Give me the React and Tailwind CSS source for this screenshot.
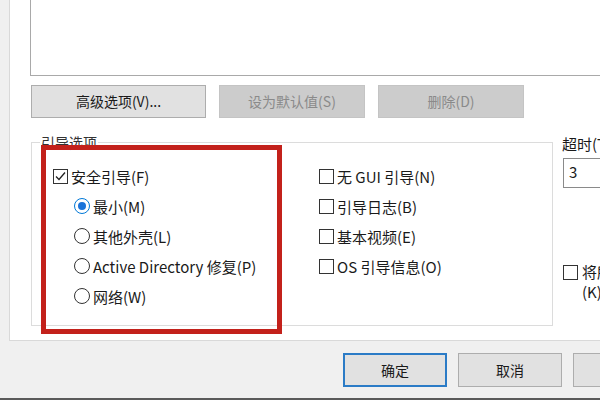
import React from "react";

const font = { fontFamily: '"Noto Sans CJK SC", "Noto Sans", sans-serif' };

const CheckBox = ({ checked = false }) => (
    <span className="w-[15px] h-[15px] border border-[#333333] bg-white flex items-center justify-center shrink-0">
        {checked && (
            <svg width="13" height="13" viewBox="0 0 13 13">
                <path d="M2 6.5 L5 9.5 L11 2.5" fill="none" stroke="#222" strokeWidth="1.3" />
            </svg>
        )}
    </span>
);

const Radio = ({ checked = false }) => (
    <span
        className={`w-[16px] h-[16px] rounded-full border bg-white flex items-center justify-center shrink-0 ${
            checked ? "border-[#0078d7]" : "border-[#333333]"
        }`}
    >
        {checked && <span className="w-[8px] h-[8px] rounded-full bg-[#1a73d9]" />}
    </span>
);

const Option = ({ control, label, indent = false }) => (
    <div className={`h-[30px] flex items-center gap-[3px] ${indent ? "pl-[21px]" : ""}`}>
        {control}
        <span className="text-[15px] text-[#1a1a1a] leading-none whitespace-nowrap">{label}</span>
    </div>
);

const Button = ({ children, w, disabled = false, primary = false }) => (
    <div
        className={`h-[33px] flex items-center justify-center text-[14px] shrink-0 ${
            disabled
                ? "bg-[#cccccc] border border-[#c4c4c4] text-[#8a8a8a]"
                : primary
                ? "bg-[#e1e1e1] border-2 border-[#2b7bc6] text-[#1a1a1a]"
                : "bg-[#e1e1e1] border border-[#adadad] text-[#1a1a1a]"
        } ${w}`}
    >
        {children}
    </div>
);

export default function App() {
    return (
        <div className="w-[600px] h-[400px] bg-[#f0f0f0] overflow-hidden flex flex-col" style={font}>
            {/* tab page */}
            <div className="h-[341px] ml-[9px] w-[720px] bg-white border-l border-b border-[#d9d9d9] pl-[20px] shrink-0">
                {/* list box, top cut off */}
                <div className="h-[76px] w-[700px] border-x border-b border-[#a9a9a9] bg-white" />

                {/* action buttons */}
                <div className="flex gap-[13px] mt-[9px] pl-[1px]">
                    <Button w="w-[175px]">高级选项(V)...</Button>
                    <Button w="w-[146px]" disabled>设为默认值(S)</Button>
                    <Button w="w-[146px]" disabled>删除(D)</Button>
                </div>

                <div className="flex mt-[24px]">
                    {/* boot options group */}
                    <div className="relative w-[522px] h-[184px] border border-[#dcdcdc] ml-[1px] shrink-0">
                        <span className="absolute -top-[11px] left-[8px] bg-white px-[1px] text-[14px] text-[#333333] leading-[20px]">
                            引导选项
                        </span>
                        <div className="flex pt-[18px] pl-[21px]">
                            <div className="w-[266px]">
                                <Option control={<CheckBox checked />} label="安全引导(F)" />
                                <Option indent control={<Radio checked />} label="最小(M)" />
                                <Option indent control={<Radio />} label="其他外壳(L)" />
                                <Option indent control={<Radio />} label="Active Directory 修复(P)" />
                                <Option indent control={<Radio />} label="网络(W)" />
                            </div>
                            <div>
                                <Option control={<CheckBox />} label="无 GUI 引导(N)" />
                                <Option control={<CheckBox />} label="引导日志(B)" />
                                <Option control={<CheckBox />} label="基本视频(E)" />
                                <Option control={<CheckBox />} label="OS 引导信息(O)" />
                            </div>
                        </div>
                        {/* red annotation */}
                        <div className="absolute left-[9px] top-[2px] w-[241px] h-[189px] border-[5px] border-[#c3211b]" />
                    </div>

                    {/* timeout column */}
                    <div className="ml-[9px] -mt-[8px] w-[200px] shrink-0">
                        <div className="text-[15px] text-[#1a1a1a] leading-[20px] whitespace-nowrap">超时(T):</div>
                        <div className="mt-[4px] ml-[1px] w-[120px] h-[30px] border border-[#8a8a8a] text-[15px] text-[#1a1a1a] px-[5px] leading-[26px]">
                            3
                        </div>
                        <div className="flex gap-[4px] mt-[74px] ml-[1px]">
                            <span className="mt-[3px]">
                                <CheckBox />
                            </span>
                            <div className="text-[15px] text-[#1a1a1a] leading-[20px] whitespace-nowrap">
                                <div>将所有引导设置设为永久</div>
                                <div>(K)</div>
                            </div>
                        </div>
                    </div>
                </div>
            </div>

            {/* dialog buttons */}
            <div className="flex gap-[11px] pl-[343px] mt-[12px]">
                <Button w="w-[104px] h-[34px]" primary>确定</Button>
                <Button w="w-[104px] h-[34px]">取消</Button>
                <Button w="w-[104px] h-[34px]">应用(A)</Button>
            </div>

            <div className="mt-auto h-[2px] bg-[#5a5a5a]" />
        </div>
    );
}
